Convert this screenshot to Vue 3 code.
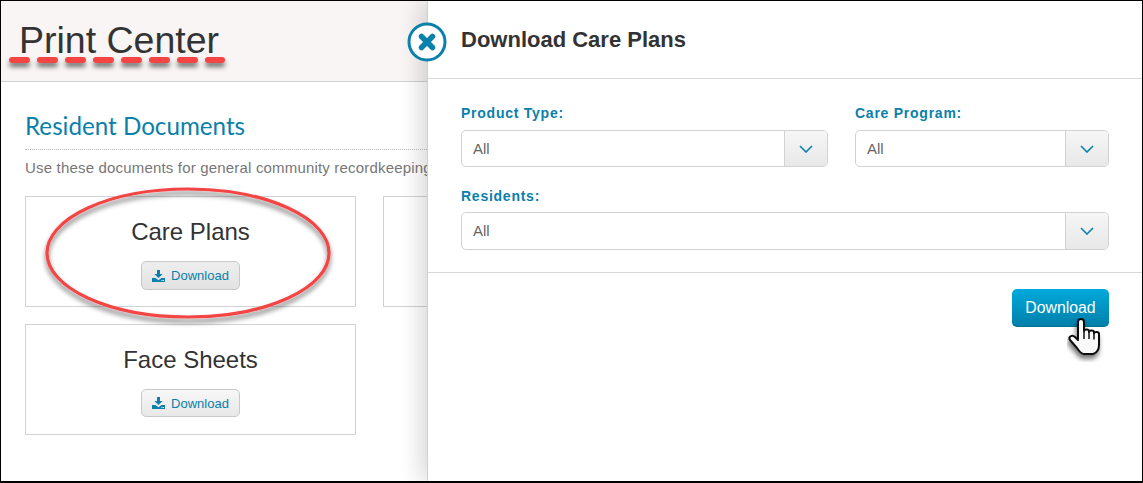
<script setup>
const docs = [
  { title: 'Care Plans', id: 'a' },
  { title: '', id: 'b' },
  { title: 'Face Sheets', id: 'c' }
]
</script>

<template>
  <div class="frame">
    <header class="top"><h1>Print Center</h1></header>
    <main class="content">
      <h2>Resident Documents</h2>
      <p class="lead">Use these documents for general community recordkeeping</p>
      <div class="cards">
        <section v-for="d in docs" :key="d.id" class="card" :class="'card-' + d.id">
          <template v-if="d.title">
            <h3>{{ d.title }}</h3>
            <button class="mini">
              <svg width="13" height="12" viewBox="0 0 13 12"><path fill="#0a80ab" d="M5 0h3v4h2.600L6.500 8 2.400 4H5zM0 8h3.500l3 2.200L9.500 8H13v4H0z"/><path fill="#fff" d="M9.500 10h1v1h-1zM11 10h1v1h-1z"/></svg>
              Download
            </button>
          </template>
        </section>
      </div>
    </main>

    <aside class="drawer">
      <div class="drawer-head">
        <h2>Download Care Plans</h2>
      </div>
      <div class="form">
        <div class="row">
          <div class="field grow">
            <label>Product Type:</label>
            <div class="select"><span>All</span><i><svg width="14" height="8" viewBox="0 0 14 8"><path d="M1 1l6 6 6-6" fill="none" stroke="#0a80ab" stroke-width="1.600"/></svg></i></div>
          </div>
          <div class="field second">
            <label>Care Program:</label>
            <div class="select"><span>All</span><i><svg width="14" height="8" viewBox="0 0 14 8"><path d="M1 1l6 6 6-6" fill="none" stroke="#0a80ab" stroke-width="1.600"/></svg></i></div>
          </div>
        </div>
        <div class="field residents">
          <label>Residents:</label>
          <div class="select tall"><span>All</span><i><svg width="14" height="8" viewBox="0 0 14 8"><path d="M1 1l6 6 6-6" fill="none" stroke="#0a80ab" stroke-width="1.600"/></svg></i></div>
        </div>
      </div>
      <div class="actions"><button class="primary">Download</button></div>
    </aside>

    <svg class="close" width="40" height="40" viewBox="0 0 40 40">
      <circle cx="20" cy="20" r="18" fill="#fff" stroke="#0a80ab" stroke-width="3"/>
      <path d="M14.500 14.500l11 11M25.500 14.500l-11 11" stroke="#0a80ab" stroke-width="5.500" stroke-linecap="round"/>
    </svg>

    <svg class="marks" width="1143" height="483" viewBox="0 0 1143 483">
      <defs>
        <filter id="sh" filterUnits="userSpaceOnUse" x="0" y="0" width="500" height="400">
          <feDropShadow dx="0" dy="4" stdDeviation="2.500" flood-color="#000" flood-opacity="0.55"/>
        </filter>
      </defs>
      <path d="M12 60H222" fill="none" stroke="#f44545" stroke-width="6" stroke-linecap="round" stroke-dasharray="15 13" filter="url(#sh)"/>
      <ellipse cx="188" cy="253" rx="141" ry="64" fill="none" stroke="#f44545" stroke-width="3.200" filter="url(#sh)"/>
    </svg>

    <svg class="hand" width="40" height="44" viewBox="0 0 40 44">
      <defs>
        <filter id="hs" filterUnits="userSpaceOnUse" x="-5" y="-5" width="50" height="54">
          <feDropShadow dx="-1" dy="4" stdDeviation="2.500" flood-color="#000" flood-opacity="0.55"/>
        </filter>
      </defs>
      <path filter="url(#hs)" fill="#fafafa" stroke="#111" stroke-width="2" stroke-linejoin="round"
        d="M11 4c0-4 6-4 6 0v9c0-2 5-2 5 0v1c0-2 5-2 5 0v1.500c0-2 5-2 5 .5v11c0 5-3 8-6 9h-9c-3 0-5-3-7-6l-7-8c-2-3 2-6 5-3l3 3z"/>
      <path d="M17 13v8M22 14v7M27 15.500v6" stroke="#111" stroke-width="1.500" fill="none"/>
    </svg>
  </div>
</template>

<style>
html, body { margin: 0; background: #fff; }
</style>

<style scoped>
* { box-sizing: border-box; }
.frame {
  position: relative;
  width: 1143px;
  height: 483px;
  overflow: hidden;
  border: 1px solid #000;
  border-bottom-width: 2px;
  background: #fff;
  font-family: "Liberation Sans", Arial, sans-serif;
  color: #333;
}
.top {
  height: 81px;
  background: #f8f5f4;
  border-bottom: 1px solid #d0d0d0;
  padding: 20px 0 0 18px;
}
.top h1 {
  margin: 0;
  font-size: 37.500px;
  line-height: 38px;
  font-weight: 400;
}
.content { padding: 28px 0 0 24px; }
.content h2 {
  margin: 0;
  font-family: Lato, sans-serif;
  font-size: 24.200px;
  line-height: 32px;
  font-weight: 400;
  color: #0a80ab;
  width: 400px;
}
.lead {
  width: 402px;
  height: 29px;
  white-space: nowrap;
  margin: 7px 0 0;
  padding-top: 9px;
  border-top: 1px dotted #bbb;
  font-size: 15px;
  letter-spacing: 0.18px;
  line-height: 18px;
  color: #777;
}
.cards {
  margin-top: 18px;
  display: grid;
  grid-template-columns: 331px 331px;
  column-gap: 27px;
  row-gap: 17px;
}
.card {
  height: 111px;
  border: 1px solid #d2d2d2;
  display: flex;
  flex-direction: column;
  align-items: center;
  padding-top: 20px;
}
.card h3 {
  margin: 0;
  font-size: 24px;
  line-height: 29px;
  font-weight: 400;
}
.mini {
  margin-top: 15px;
  width: 99px;
  height: 29px;
  display: flex;
  align-items: center;
  justify-content: center;
  gap: 6px;
  border: 1px solid #c8c8c8;
  border-radius: 5px;
  background: linear-gradient(#eee, #e2e2e2);
  color: #0a80ab;
  font: 13px "Liberation Sans", Arial, sans-serif;
  padding: 0;
}
.card-c .mini { background: linear-gradient(#f7f7f7, #e8e8e8); height: 28px; }
.drawer {
  position: absolute;
  left: 426px;
  top: 0;
  bottom: 0;
  right: 0;
  background: #fff;
  border-left: 1px solid #d0d0d0;
  box-shadow: -6px 0 22px rgba(0, 0, 0, 0.16);
}
.drawer-head {
  height: 78px;
  border-bottom: 1px solid #d8d8d8;
  padding: 24px 0 0 33px;
}
.drawer-head h2 {
  margin: 0;
  font-size: 22px;
  line-height: 30px;
  font-weight: 700;
  color: #333;
}
.form { padding: 26px 33px 0; height: 194px; border-bottom: 1px solid #d8d8d8; }
.row { display: flex; gap: 27px; }
.grow { flex: 1; }
.second { width: 254px; flex: none; }
.field label {
  display: block;
  font-size: 14px;
  line-height: 17px;
  font-weight: 700;
  letter-spacing: 0.75px;
  color: #0a80ab;
  margin-bottom: 8px;
}
.residents { margin-top: 21px; }
.residents label { margin-bottom: 7px; }
.select {
  height: 37px;
  display: flex;
  align-items: stretch;
  border: 1px solid #d2d2d2;
  border-radius: 5px;
  overflow: hidden;
  background: #fff;
}
.select.tall { height: 38px; }
.select.tall span { padding-bottom: 1px; }
.select span {
  flex: 1;
  display: flex;
  align-items: center;
  padding-left: 11px;
  font-size: 15px;
  color: #666;
}
.select i {
  width: 43px;
  display: flex;
  align-items: center;
  justify-content: center;
  border-left: 1px solid #d2d2d2;
  background: linear-gradient(#f6f6f6, #e8e8e8);
}
.actions {
  display: flex;
  justify-content: flex-end;
  padding: 16px 33px 0 0;
}
.primary {
  width: 97px;
  height: 38px;
  border: 0;
  border-radius: 5px;
  background: linear-gradient(#00a9dc, #0080aa);
  border-bottom: 1px solid #00708f;
  color: #fff;
  font: 15.800px "Liberation Sans", Arial, sans-serif;
  padding: 0;
}
.close { position: absolute; left: 406px; top: 21px; }
.marks { position: absolute; left: -1px; top: -1px; pointer-events: none; }
.hand { position: absolute; left: 1066px; top: 317px; }
</style>
